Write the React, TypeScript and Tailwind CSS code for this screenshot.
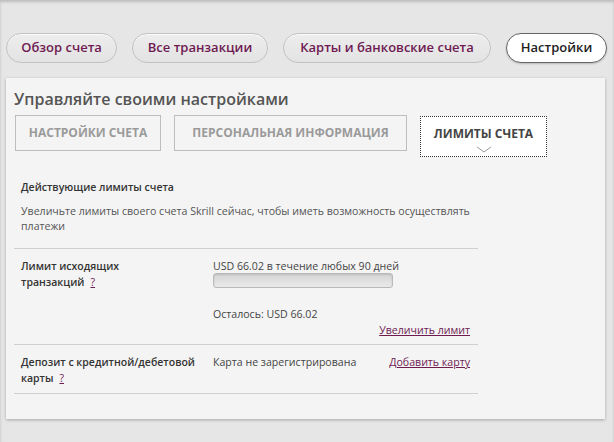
const purple = 'text-[#6e1b52]';

const navItems = [
  { label: 'Обзор счета', width: 'w-[111px]' },
  { label: 'Все транзакции', width: 'w-[136px]' },
  { label: 'Карты и банковские счета', width: 'w-[208px]' },
];

const HelpMark = () => (
  <a href="#" className={`ml-[6px] font-normal underline ${purple}`}>
    ?
  </a>
);

export default function App() {
  return (
    <div className="h-[442px] w-[614px] overflow-hidden bg-[#e6e6e6] px-[6px] pt-[33px] font-['Open_Sans',sans-serif] shadow-[inset_0_2px_3px_rgba(0,0,0,0.18)]">
      {/* top navigation pills */}
      <nav className="flex gap-[15px]">
        {navItems.map((item) => (
          <a
            key={item.label}
            href="#"
            className={`flex h-[30px] ${item.width} items-center justify-center rounded-full border border-[#c2c2c2] bg-[linear-gradient(#ededed,#e3e3e3)] text-[13px] font-semibold ${purple} shadow-[inset_0_1px_0_rgba(255,255,255,0.8)]`}
          >
            {item.label}
          </a>
        ))}
        <a
          href="#"
          className="flex h-[30px] w-[101px] items-center justify-center rounded-full border border-[#666] bg-white text-[13px] font-semibold text-[#1e1e1e] shadow-[0_1px_2px_rgba(0,0,0,0.2)]"
        >
          Настройки
        </a>
      </nav>

      {/* settings panel */}
      <section className="mt-[15px] h-[341px] w-[599px] bg-[#f4f4f4] pl-[8px] pt-[11px] shadow-[0_1px_3px_rgba(0,0,0,0.28)]">
        <h1 className="text-[16px] font-semibold leading-[20px] text-[#555]">Управляйте своими настройками</h1>

        <div className="ml-[1px] mt-[6px] flex items-start gap-[13px] text-[12px] font-bold">
          <button className="flex h-[36px] w-[146px] items-center justify-center border border-[#bdbdbd] uppercase text-[#9a9a9a]">
            Настройки счета
          </button>
          <button className="flex h-[36px] w-[233px] items-center justify-center border border-[#bdbdbd] uppercase text-[#9a9a9a]">
            Персональная информация
          </button>
          <button className="relative mt-[1px] flex h-[41px] w-[127px] items-center justify-center border border-dotted border-[#333] bg-white pb-[5px] uppercase text-[#444]">
            Лимиты счета
            <svg className="absolute bottom-[3px] left-[55px]" width="16" height="7" viewBox="0 0 16 7">
              <path d="M1 1 L8 6 L15 1" fill="none" stroke="#9a9a9a" strokeWidth="1" />
            </svg>
          </button>
        </div>

        <div className="w-[464px] text-[10.6px] leading-[15px]">
          <div className="pl-[7px] pb-[14px] pt-[23px]">
            <h2 className="text-[10.5px] font-semibold text-[#333]">Действующие лимиты счета</h2>
            <p className="mt-[9px] text-[#555]">
              Увеличьте лимиты своего счета Skrill сейчас, чтобы иметь возможность осуществлять платежи
            </p>
          </div>

          <div className="flex border-t border-[#d0d0d0] pb-[6px] pl-[7px] pr-[8px] pt-[9px]">
            <div className="w-[192px] text-[10.5px] font-semibold leading-[16px] text-[#333]">
              Лимит исходящих
              <br />
              транзакций
              <HelpMark />
            </div>
            <div className="flex flex-1 flex-col text-[#444]">
              <span className="mt-[1px] leading-[14px]">USD 66.02 в течение любых 90 дней</span>
              <div className="h-[15px] w-[180px] rounded-[3px] border border-[#b9b9b9] bg-[linear-gradient(#d5d5d5,#e9e9e9)] shadow-[inset_0_1px_2px_rgba(0,0,0,0.12)]" />
              <span className="mt-[18px] leading-[16px]">Осталось: USD 66.02</span>
              <a href="#" className={`self-end leading-[16px] underline ${purple}`}>
                Увеличить лимит
              </a>
            </div>
          </div>

          <div className="flex border-y border-[#d0d0d0] pb-[7px] pl-[7px] pr-[8px] pt-[9px] leading-[16px]">
            <div className="w-[192px] text-[10.5px] font-semibold text-[#333]">
              Депозит с кредитной/дебетовой
              <br />
              карты
              <HelpMark />
            </div>
            <div className="flex flex-1 items-start justify-between text-[#444]">
              <span>Карта не зарегистрирована</span>
              <a href="#" className={`underline ${purple}`}>
                Добавить карту
              </a>
            </div>
          </div>
        </div>
      </section>
    </div>
  );
}
